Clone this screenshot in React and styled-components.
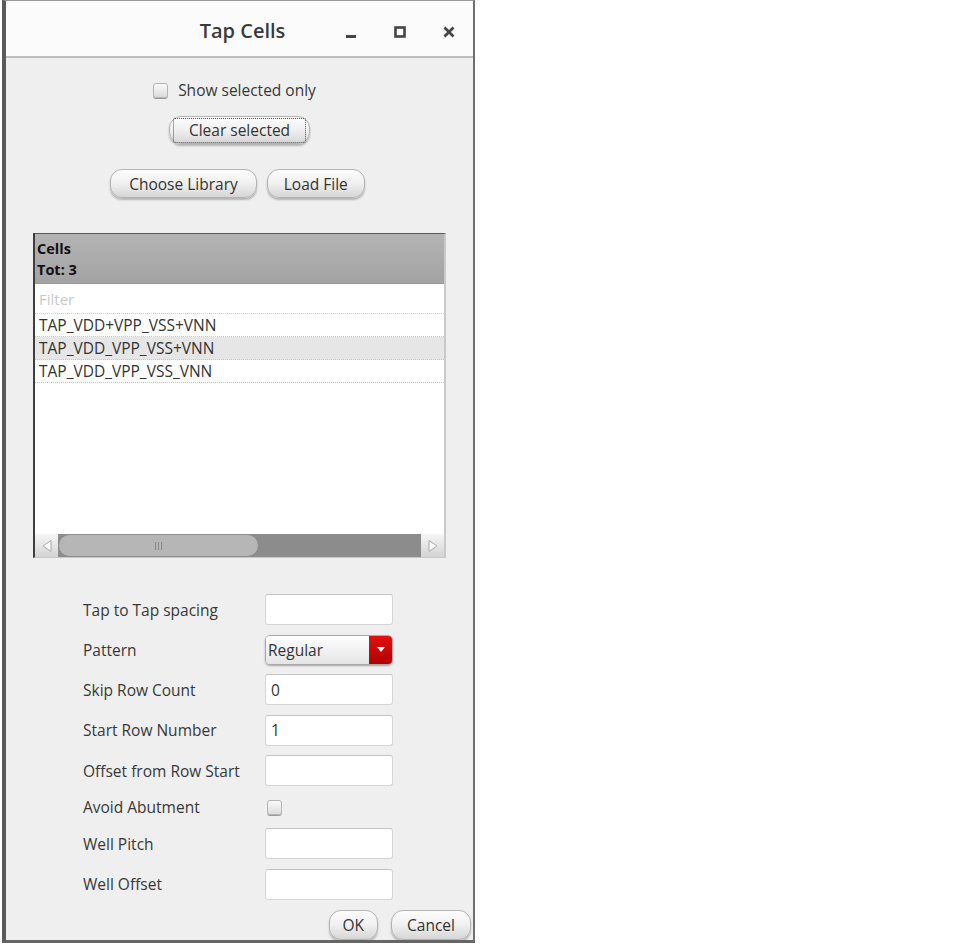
import React from 'react'
import styled, { createGlobalStyle } from 'styled-components'

const GlobalStyle = createGlobalStyle`
  html, body {
    margin: 0;
    padding: 0;
    background: #ffffff;
  }
  body {
    font-family: "Open Sans", "DejaVu Sans", sans-serif;
    -webkit-font-smoothing: antialiased;
  }
`

const Window = styled.div`
  margin-left: 2px;
  width: 467px;
  height: 939px;
  border-left: 4px solid #5a5a5a;
  border-right: 2px solid #6e6e6e;
  border-bottom: 3px solid #666;
  border-top: 1px solid #9a9a9a;
  background: #efefef;
  display: flex;
  flex-direction: column;
  overflow: hidden;
`

const TitleBar = styled.div`
  height: 55px;
  flex-shrink: 0;
  background: #fbfbfb;
  border-bottom: 2px solid #bdbdbd;
  display: flex;
  align-items: center;
  position: relative;
`

const Title = styled.div`
  flex: 1;
  text-align: center;
  font-size: 20px;
  font-weight: 600;
  color: #3a3a3a;
  padding-left: 6px;
  padding-top: 3px;
`

const Controls = styled.div`
  position: absolute;
  right: 0;
  top: 0;
  height: 100%;
  display: flex;
  align-items: center;
  padding-top: 3px;
`

const Ctl = styled.div`
  width: 49px;
  height: 20px;
  display: flex;
  align-items: center;
  justify-content: center;
`

const Body = styled.div`
  display: flex;
  flex-direction: column;
  align-items: center;
  flex: 1;
  position: relative;
`

const CheckRow = styled.label`
  margin-top: 22px;
  height: 20px;
  display: flex;
  align-items: center;
  gap: 10px;
  font-size: 15.5px;
  color: #383838;
  margin-right: 10px;
`

const Box = styled.span`
  width: 13px;
  height: 13px;
  border: 1px solid #b4b4b4;
  border-radius: 3px;
  background: linear-gradient(#fafafa, #dcdcdc);
  box-shadow: 0 1px 0 #999;
  display: inline-block;
`

const Button = styled.button`
  font-family: "Open Sans", "DejaVu Sans", sans-serif;
  font-size: 15.5px;
  color: #333;
  height: ${p => p.$h || 29}px;
  padding: 0 ${p => p.$px || 18}px;
  border: 1px solid #b3b3b3;
  border-radius: 12px;
  background: linear-gradient(#fdfdfd 0%, #f0f0f0 50%, #d6d6d6 100%);
  box-shadow: 0 2px 2px rgba(0, 0, 0, 0.25);
  display: flex;
  align-items: center;
  justify-content: center;
  white-space: nowrap;
`

const FocusText = styled.span`
  border: 1px dotted #555;
  padding: 0 15px 1px;
  border-radius: 2px;
`

const ClearWrap = styled.div`
  margin-top: 16px;
`

const ButtonRow = styled.div`
  margin-top: 25px;
  display: flex;
  gap: 10px;
  margin-right: 4px;
`

const Table = styled.div`
  margin-top: 35px;
  align-self: flex-start;
  margin-left: 27px;
  width: 409px;
  height: 323px;
  border-left: 2px solid #3e3e3e;
  border-top: 1px solid #555;
  border-right: 2px solid #c9c9c9;
  border-bottom: 1px solid #c9c9c9;
  background: #fff;
  display: flex;
  flex-direction: column;
`

const Header = styled.div`
  height: 49px;
  background: linear-gradient(#b4b4b4, #a3a3a3);
  padding-left: 2px;
  display: flex;
  flex-direction: column;
  justify-content: center;
  font-size: 14.5px;
  font-weight: 700;
  color: #111;
  line-height: 21px;
  border-bottom: 1px solid #9a9a9a;
`

const Filter = styled.div`
  height: 29px;
  padding-left: 4px;
  display: flex;
  align-items: center;
  font-size: 15px;
  color: #c8c8c8;
  border-bottom: 1px dotted #d2d2d2;
`

const Row = styled.div`
  height: 22px;
  padding-left: 4px;
  display: flex;
  align-items: center;
  font-size: 15.5px;
  color: #333;
  background: ${p => (p.$sel ? '#e6e6e6' : '#fff')};
  border-bottom: 1px dotted #c8c8c8;
`

const Spacer = styled.div`
  flex: 1;
`

const Scrollbar = styled.div`
  height: 23px;
  display: flex;
  align-items: stretch;
  background: #8c8c8c;
`

const Arrow = styled.div`
  width: 23px;
  background: linear-gradient(#f6f6f6, #d4d4d4);
  display: flex;
  align-items: center;
  justify-content: center;
`

const Track = styled.div`
  flex: 1;
  display: flex;
  align-items: center;
  padding: 0 1px;
`

const Thumb = styled.div`
  width: 199px;
  height: 21px;
  border-radius: 11px;
  background: #b6b6b6;
  display: flex;
  align-items: center;
  justify-content: center;
`

const Grip = styled.div`
  width: 8px;
  height: 8px;
  background: repeating-linear-gradient(90deg, #888 0 1px, transparent 1px 3px);
`

const Form = styled.div`
  margin-top: 36px;
  align-self: flex-start;
  margin-left: 77px;
  display: grid;
  grid-template-columns: 182px 128px;
  row-gap: 9.5px;
  align-items: center;
`

const Label = styled.div`
  font-size: 15.5px;
  color: #383838;
`

const Input = styled.div`
  height: 31px;
  background: #fff;
  border: 1px solid #d6d6d6;
  border-top-color: #c4c4c4;
  border-radius: 3px;
  box-sizing: border-box;
  display: flex;
  align-items: center;
  padding-left: 5px;
  font-size: 15.5px;
  color: #333;
`

const Select = styled.div`
  height: 30px;
  border: 1px solid #aaa;
  border-radius: 5px;
  overflow: hidden;
  display: flex;
  box-sizing: border-box;
  box-shadow: 0 1px 2px rgba(0, 0, 0, 0.3);
`

const SelectText = styled.div`
  flex: 1;
  background: linear-gradient(#ffffff, #e4e4e4);
  display: flex;
  align-items: center;
  padding-left: 2px;
  font-size: 15.5px;
  color: #333;
`

const SelectBtn = styled.div`
  width: 23px;
  background: linear-gradient(#e31010, #b10000);
  display: flex;
  align-items: center;
  justify-content: center;
`

const SmallCheck = styled(Box)`
  margin-left: 2px;
`

const CheckCell = styled.div`
  height: 23px;
  display: flex;
  align-items: center;
`

const Footer = styled.div`
  margin-top: 10px;
  align-self: flex-end;
  display: flex;
  gap: 13px;
  margin-right: 2px;
`

const fields = [
  ['Tap to Tap spacing', ''],
  ['Pattern', 'select'],
  ['Skip Row Count', '0'],
  ['Start Row Number', '1'],
  ['Offset from Row Start', ''],
  ['Avoid Abutment', 'check'],
  ['Well Pitch', ''],
  ['Well Offset', '']
]

const App = () => (
  <>
    <GlobalStyle />
    <Window>
      <TitleBar>
        <Title>Tap Cells</Title>
        <Controls>
          <Ctl>
            <svg width="12" height="12" viewBox="0 0 12 12">
              <rect x="1" y="9" width="10" height="3" fill="#444" />
            </svg>
          </Ctl>
          <Ctl>
            <svg width="12" height="12" viewBox="0 0 12 12">
              <rect x="1.5" y="1.5" width="9" height="9" fill="none" stroke="#444" strokeWidth="2.6" />
            </svg>
          </Ctl>
          <Ctl>
            <svg width="12" height="12" viewBox="0 0 12 12">
              <path d="M1.5 1.5 L10.5 10.5 M10.5 1.5 L1.5 10.5" stroke="#444" strokeWidth="2.8" />
            </svg>
          </Ctl>
        </Controls>
      </TitleBar>
      <Body>
        <CheckRow>
          <Box />
          Show selected only
        </CheckRow>
        <ClearWrap>
          <Button $h={28} $px={3}>
            <FocusText>Clear selected</FocusText>
          </Button>
        </ClearWrap>
        <ButtonRow>
          <Button $px={18}>Choose Library</Button>
          <Button $px={16}>Load File</Button>
        </ButtonRow>
        <Table>
          <Header>
            <div>Cells</div>
            <div>Tot: 3</div>
          </Header>
          <Filter>Filter</Filter>
          <Row>TAP_VDD+VPP_VSS+VNN</Row>
          <Row $sel>TAP_VDD_VPP_VSS+VNN</Row>
          <Row>TAP_VDD_VPP_VSS_VNN</Row>
          <Spacer />
          <Scrollbar>
            <Arrow>
              <svg width="12" height="14" viewBox="0 0 12 14">
                <path d="M10 1.5 L2 7 L10 12.5 Z" fill="#fafafa" stroke="#aaa" />
              </svg>
            </Arrow>
            <Track>
              <Thumb>
                <Grip />
              </Thumb>
            </Track>
            <Arrow>
              <svg width="12" height="14" viewBox="0 0 12 14">
                <path d="M2 1.5 L10 7 L2 12.5 Z" fill="#fafafa" stroke="#aaa" />
              </svg>
            </Arrow>
          </Scrollbar>
        </Table>
        <Form>
          {fields.map(([label, kind]) => (
            <React.Fragment key={label}>
              <Label>{label}</Label>
              {kind === 'select' ? (
                <Select>
                  <SelectText>Regular</SelectText>
                  <SelectBtn>
                    <svg width="8" height="5" viewBox="0 0 8 5">
                      <path d="M0 0 L8 0 L4 5 Z" fill="#fff" />
                    </svg>
                  </SelectBtn>
                </Select>
              ) : kind === 'check' ? (
                <CheckCell>
                  <SmallCheck />
                </CheckCell>
              ) : (
                <Input>{kind}</Input>
              )}
            </React.Fragment>
          ))}
        </Form>
        <Footer>
          <Button $h={30} $px={13}>OK</Button>
          <Button $h={30} $px={15}>Cancel</Button>
        </Footer>
      </Body>
    </Window>
  </>
)

export default App
